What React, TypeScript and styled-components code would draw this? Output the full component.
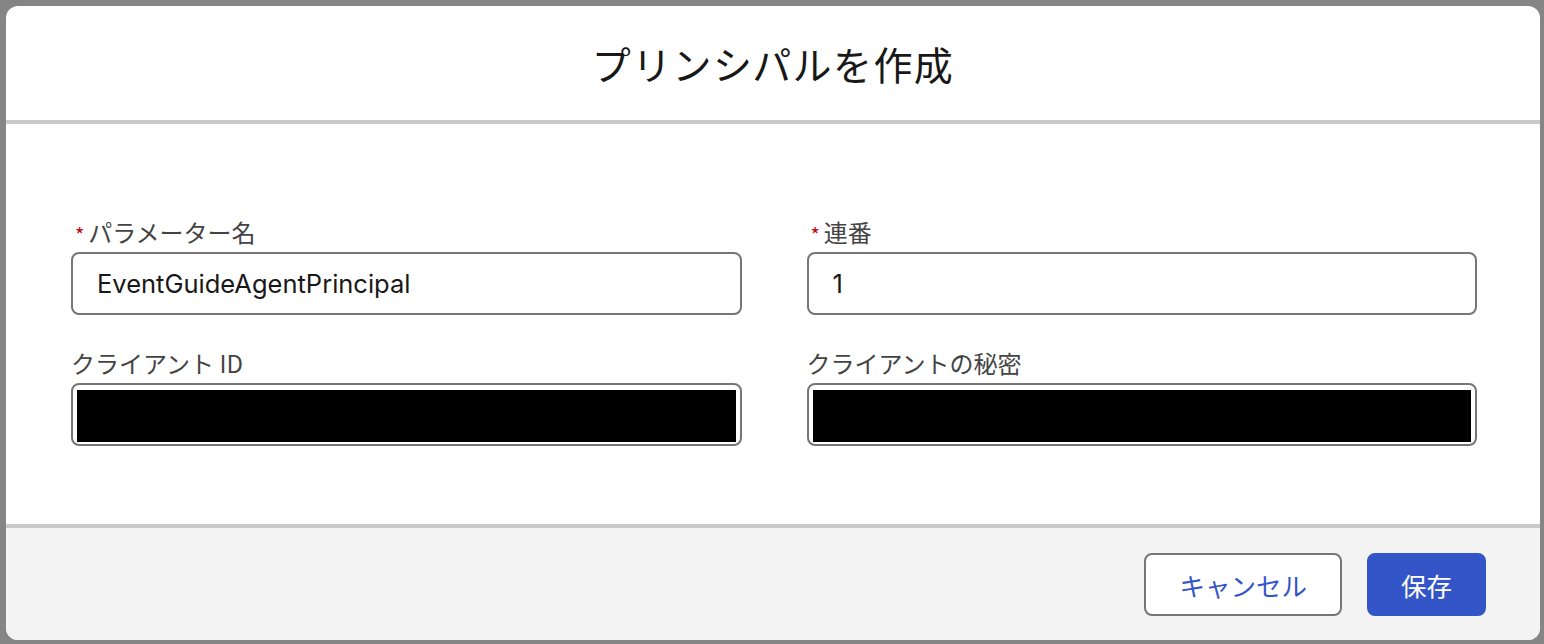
import React from 'react';
import styled, { createGlobalStyle } from 'styled-components';

const GlobalStyle = createGlobalStyle`
  html, body {
    margin: 0;
    padding: 0;
    background: #858585;
  }
  * {
    box-sizing: border-box;
  }
  body {
    font-family: 'Noto Sans', 'Noto Sans CJK JP', sans-serif;
  }
`;

const Backdrop = styled.div`
  width: 1544px;
  height: 644px;
  padding: 6px 4px 4px 6px;
  background: #858585;
`;

const Modal = styled.section`
  height: 100%;
  display: flex;
  flex-direction: column;
  background: #fff;
  border-radius: 12px;
  overflow: hidden;
`;

const Header = styled.header`
  height: 118px;
  flex: none;
  display: flex;
  align-items: center;
  justify-content: center;
  border-bottom: 4px solid #c9c9c9;
`;

const Title = styled.h1`
  margin: 0;
  font-family: 'Noto Sans CJK JP', sans-serif;
  font-weight: 400;
  font-size: 39px;
  color: #181818;
  letter-spacing: 1.4px;
`;

const Body = styled.div`
  flex: none;
  padding: 92px 63px 78px 65px;
  display: grid;
  grid-template-columns: repeat(2, minmax(0, 1fr));
  column-gap: 65px;
  row-gap: 32px;
  align-content: start;
`;

const Field = styled.div`
  display: flex;
  flex-direction: column;
  gap: 6px;
`;

const Label = styled.label`
  height: 30px;
  display: flex;
  align-items: center;
  font-family: 'Noto Sans CJK JP', sans-serif;
  font-size: 24px;
  color: #444;
`;

const Required = styled.abbr`
  color: #ba0517;
  text-decoration: none;
  font-size: 20px;
  margin: 0 4px 0 4px;
  align-self: flex-start;
  padding-top: 4px;
`;

const InputBox = styled.div<{ $redacted?: boolean }>`
  height: 63px;
  border: 2px solid #767676;
  border-radius: 8px;
  background: #fff;
  display: flex;
  align-items: center;
  padding: ${(p) => (p.$redacted ? '5px 4px 2px 4px' : '0 24px')};
  font-family: 'Inter', 'Noto Sans', sans-serif;
  font-size: 25.5px;
  color: #181818;
`;

const Redacted = styled.div`
  width: 100%;
  height: 100%;
  background: #000;
`;

const Footer = styled.footer`
  flex: 1;
  background: #f3f3f3;
  border-top: 4px solid #c9c9c9;
  display: flex;
  justify-content: flex-end;
  align-items: center;
  gap: 25px;
  padding: 0 54px 0 0;
`;

const Button = styled.button<{ $brand?: boolean }>`
  height: 63px;
  padding: 0 ${(p) => (p.$brand ? '32px' : '33px')};
  border-radius: 8px;
  white-space: nowrap;
  font-family: 'Noto Sans CJK JP', sans-serif;
  font-size: 25.5px;
  border: 2px solid ${(p) => (p.$brand ? '#3455c8' : '#767676')};
  background: ${(p) => (p.$brand ? '#3455c8' : '#fff')};
  color: ${(p) => (p.$brand ? '#fff' : '#3455c8')};
  cursor: pointer;
`;

type FieldDef = {
  label: string;
  required?: boolean;
  value?: string;
  redacted?: boolean;
};

const fields: FieldDef[] = [
  { label: 'パラメーター名', required: true, value: 'EventGuideAgentPrincipal' },
  { label: '連番', required: true, value: '1' },
  { label: 'クライアント ID', redacted: true },
  { label: 'クライアントの秘密', redacted: true },
];

const App = () => {
  return (
    <>
      <GlobalStyle />
      <Backdrop>
        <Modal>
          <Header>
            <Title>プリンシパルを作成</Title>
          </Header>
          <Body>
            {fields.map((f) => (
              <Field key={f.label}>
                <Label>
                  {f.required && <Required title="required">*</Required>}
                  {f.label}
                </Label>
                <InputBox $redacted={f.redacted}>
                  {f.redacted ? <Redacted /> : f.value}
                </InputBox>
              </Field>
            ))}
          </Body>
          <Footer>
            <Button>キャンセル</Button>
            <Button $brand>保存</Button>
          </Footer>
        </Modal>
      </Backdrop>
    </>
  );
};

export default App;
